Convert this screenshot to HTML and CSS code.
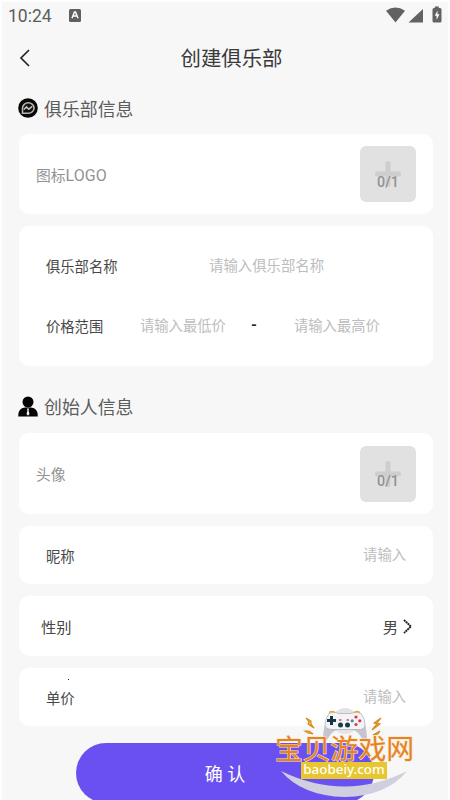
FILE: index.html
```html
<!DOCTYPE html>
<html lang="zh-CN">
<head>
<meta charset="utf-8">
<title>创建俱乐部</title>
<link rel="stylesheet" href="styles.css">
</head>
<body>
<div class="screen">
  <header class="status">
    <span class="time">10:24</span>
    <svg class="ime" width="12" height="13" viewBox="0 0 12 13"><rect width="12" height="13" rx="1.5" fill="#606060"/><path d="M3 9.2 5.5 3h1L9 9.2M4 7h4" fill="none" stroke="#fff" stroke-width="1.5"/></svg>
    <svg class="signals" width="57" height="18" viewBox="0 0 57 18"><path d="M0 4.8Q9.500-1.800 19 4.800L9.500 16.500Z" fill="#626262"/><path d="M37 3v13.500H22.500Z" fill="#626262"/><path d="M48.800 2V.6h4V2H54q1.500 0 1.500 1.500V15q0 1.500-1.500 1.500h-6q-1.500 0-1.500-1.500V3.500Q46.500 2 48 2Z" fill="#626262"/><path d="M51.500 4.500 48.800 9.700h1.800v4l2.900-5.500h-2Z" fill="#fff"/></svg>
  </header>
  <nav class="nav">
    <svg class="back" width="12" height="18" viewBox="0 0 12 18"><path d="M10 1 2 9l8 8" fill="none" stroke="#252525" stroke-width="1.700"/></svg>
    <h1>创建俱乐部</h1>
  </nav>
  <main>
    <h2 class="section">
      <svg width="20" height="20" viewBox="0 0 20 20"><circle cx="10" cy="10" r="9.800" fill="#080808"/><path d="M4.500 15.200V10a5.800 5.200 0 1 1 5.700 5.200Z" fill="#111" stroke="#b9b4ae" stroke-width="1.600"/><path d="m5.800 11.500 2.700-2.600 2.300 2.300 3.500-2.800" fill="none" stroke="#c5c0b9" stroke-width="1.500"/></svg>
      <span>俱乐部信息</span>
    </h2>
    <section class="card upload">
      <span>图标<span class="latin">LOGO</span></span>
      <div class="picker"><svg width="26" height="26" viewBox="0 0 26 26"><path d="M13 2.500v21M2.500 13h21" stroke="#cecece" stroke-width="5" stroke-linecap="round"/></svg><b>0/1</b></div>
    </section>
    <section class="card club">
      <div class="line name"><label>俱乐部名称</label><span class="hint">请输入俱乐部名称</span></div>
      <div class="line price"><label>价格范围</label><span class="hint low">请输入最低价</span><b class="dash">-</b><span class="hint">请输入最高价</span></div>
    </section>
    <h2 class="section founder">
      <svg width="20" height="21" viewBox="0 0 20 21"><circle cx="10" cy="6" r="5.500" fill="#050505"/><path d="M.2 20.500Q0 12 7 11.500h6q7 .5 6.800 9Z" fill="#050505"/><path d="m9 12.500h2l-.4 2 .9 3.500-1.500 1.700L8.500 18l.9-3.500Z" fill="#eee"/></svg>
      <span>创始人信息</span>
    </h2>
    <section class="card upload avatar">
      <span>头像</span>
      <div class="picker"><svg width="26" height="26" viewBox="0 0 26 26"><path d="M13 2.500v21M2.500 13h21" stroke="#cecece" stroke-width="5" stroke-linecap="round"/></svg><b>0/1</b></div>
    </section>
    <section class="card field"><label>昵称</label><span class="hint">请输入</span></section>
    <section class="card gender"><label>性别</label><span>男</span><svg width="10" height="15" viewBox="0 0 10 15"><path d="m1 1 7 6.500L1 14" fill="none" stroke="#222" stroke-width="1.900" stroke-dasharray="2 .5"/></svg></section>
    <section class="card field unit"><label>单价</label><span class="hint">请输入</span><i class="speck"></i></section>
    <button class="confirm">确 认</button>
  </main>
  <aside class="watermark">
    <svg width="150" height="94" viewBox="0 0 150 94">
      <path d="M6 65Q70 96 132 65Q112 90 70 91Q27 90 6 65Z" fill="#cfcfdf"/>
      <circle cx="70" cy="15" r="13" fill="#e3e3e6"/>
      <path d="M54 9h32q5 7 6 22 0 7-4 3-5-9-10-10H62q-5 1-10 10-4 4-4-3 1-15 6-22Z" fill="#c5c5cf"/>
      <path d="M54 7.500Q59 4.500 64 7.500h12q5-3 10 0 4 5 4 11t-8 5H58q-8 0-8-5t4-11Z" fill="#f4f4f7" stroke="#aaaab5" stroke-width=".7"/>
      <path d="M56.500 10v9M52 14.500h9" stroke="#153743" stroke-width="3"/>
      <circle cx="65.500" cy="19" r="2.500" fill="#183d46"/><circle cx="72.500" cy="19" r="2.500" fill="#183d46"/>
      <circle cx="81" cy="11" r="1.600" fill="#d83a42"/><circle cx="81" cy="18.500" r="1.600" fill="#d83a42"/><circle cx="77.200" cy="14.800" r="1.600" fill="#3594aa"/><circle cx="84.800" cy="14.800" r="1.600" fill="#d83a42"/>
      <path d="M54 6.500q3-2 6 0M79 6.500q3-2 6 0" fill="none" stroke="#dbab3c" stroke-width="1.300"/>
      <path d="M64 14h2.500M71.500 14H74" stroke="#d84b54" stroke-width="1.300"/>
      <path d="m31 12 5 3v3l3 4-6-4 1-2ZM30 25l4 0 4 3-5-1ZM106 12l-7 5 3 1-5 6 8-6-3-1ZM105 25l-7 4 5-1Z" fill="#efc52d" stroke="#d68b24" stroke-width="1.200"/>
    </svg>
    <strong>宝贝游戏网</strong>
    <em>baobeiy.com</em>
  </aside>
</div>
</body>
</html>
```
FILE: styles.css
```css
* { box-sizing: border-box; }
body { margin: 0; background: #fff; }
.screen {
  position: relative;
  width: 450px;
  height: 800px;
  overflow: hidden;
  background: #f7f7f7;
  border: 2px solid #fdfdfd;
  border-bottom: 0;
  color: #484848;
  font-family: Roboto, "Noto Sans CJK SC", sans-serif;
  font-size: 14.3px;
}
.screen svg { display: block; flex: none; }
.status { display: flex; align-items: center; height: 28px; padding: 0 5px 0 6px; }
.time { width: 61px; font-size: 17.5px; color: #5d5d5d; }
.ime { margin-top: -1px; }
.signals { margin-left: auto; margin-top: -2px; }
.nav { display: flex; align-items: center; height: 56px; padding: 0 17px; }
.nav h1 { flex: 1; margin: -2px 0 0 1px; text-align: center; font-size: 20.4px; font-weight: 400; color: #3a3a3a; }
main { padding: 0 15px 0 17px; }
.section { display: flex; align-items: center; gap: 5px; height: 45px; margin: 0 0 3px -1px; padding-bottom: 2px; font-size: 17.9px; font-weight: 400; color: #5c5c5c; }
.section span { margin-left: 1px; }
.card { background: #fff; border-radius: 10px; margin-bottom: 12px; }
.upload { display: flex; align-items: center; justify-content: space-between; height: 80px; padding: 0 17px; font-size: 14.8px; color: #929292; }
.latin { font-size: 16px; }
.picker { display: grid; place-items: center; width: 56px; height: 56px; border-radius: 6px; background: #e1e1e1; color: #929292; }
.picker svg, .picker b { grid-area: 1 / 1; }
.picker b { margin-top: 15px; font-size: 14.3px; font-weight: 500; }
.hint { color: #bdbdbd; }
.club { height: 140px; padding: 9px 27px; margin-bottom: 0; }
.line { display: flex; align-items: center; height: 60px; }
.name label { width: 163px; }
.name .hint { font-size: 14.4px; }
.name .hint, .price .hint { margin-top: -2px; }
.price label { width: 94px; }
.low { width: 111px; }
.dash { width: 43px; color: #222; font-size: 15px; }
.founder { height: 64px; padding-top: 19px; }
.founder span { margin-top: -1px; }
.avatar { height: 81px; }
.field { display: flex; align-items: center; justify-content: space-between; height: 58px; padding: 0 27px; }
.field .hint { margin-top: -3px; }
.gender { display: flex; align-items: center; height: 60px; padding: 0 20px 0 22px; font-size: 15.3px; }
.gender label { flex: 1; }
.gender svg { margin-left: 5px; }
.unit { position: relative; margin-bottom: 17px; }
.speck { position: absolute; left: 49px; top: 11px; width: 1px; height: 1px; background: #222; }
.confirm { display: block; width: 298px; height: 60px; margin: 0 0 0 57px; padding: 0 0 1px; border: 0; border-radius: 30px; background: #6a50f0; color: #fff; font: 18px Roboto, "Noto Sans CJK SC", sans-serif; }
.watermark { position: absolute; left: 273px; top: 704px; width: 150px; height: 94px; }
.watermark svg { position: absolute; inset: 0; }
.watermark strong { position: absolute; left: 0; top: 28px; font: 400 27.8px/26px "Noto Sans CJK SC", sans-serif; color: #e58324; white-space: nowrap; -webkit-text-stroke: 1.2px #fbe3c0; paint-order: stroke fill; }
.watermark em { position: absolute; left: 26px; top: 56px; width: 86px; height: 17px; background: #e8c62f; color: #fff; text-align: center; font: 500 13.4px/14px "Noto Sans", sans-serif; }
```
